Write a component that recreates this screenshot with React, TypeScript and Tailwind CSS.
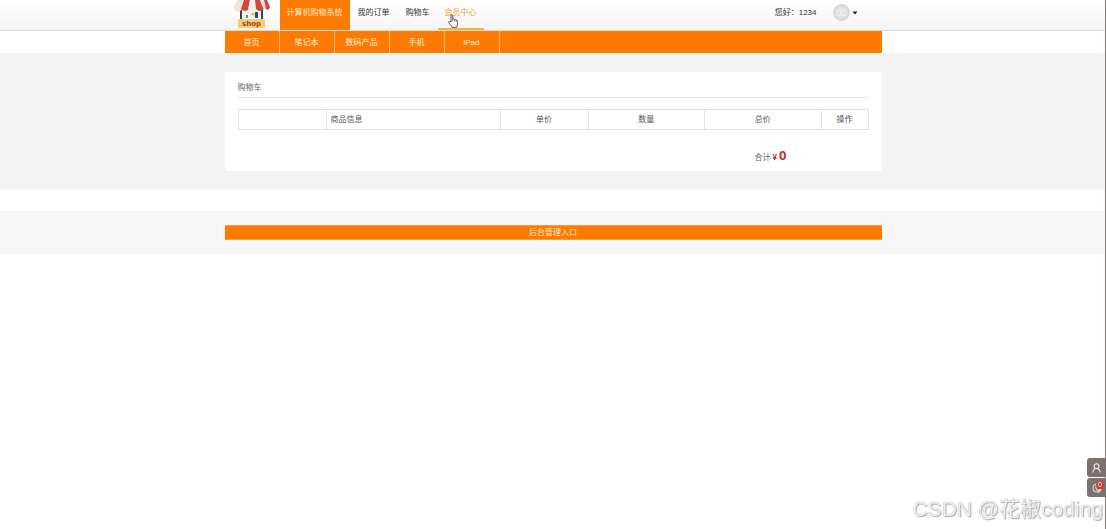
import { ReactNode } from "react";

const topLinks = ["我的订单", "购物车"];

const categories = ["首页", "笔记本", "数码产品", "手机", "iPad"];

const columns = [
  { label: "", className: "w-[88px] text-center" },
  { label: "商品信息", className: "w-[174px] pl-1 text-left" },
  { label: "单价", className: "w-[88px] text-center" },
  { label: "数量", className: "text-center" },
  { label: "总价", className: "text-center" },
  { label: "操作", className: "w-[47px] text-center" },
];

function Container({ children, className = "" }: { children: ReactNode; className?: string }) {
  return <div className={`mx-auto w-full max-w-[657px] ${className}`}>{children}</div>;
}

function ShopLogo() {
  return (
    <svg width="38" height="28" viewBox="0 0 38 28" aria-label="shop">
      <rect x="7" y="9" width="24" height="11" fill="#f7f3ec" />
      <rect x="7" y="10" width="2" height="10" fill="#33465f" />
      <rect x="28" y="10" width="2" height="10" fill="#33465f" />
      <rect x="13" y="15" width="2" height="3" fill="#4d91a0" />
      <rect x="22" y="12" width="3" height="6" fill="#26507a" />
      <circle cx="20" cy="14" r="1.6" fill="#e8b454" />
      <path d="M5 0H12L9 9Q5 14 1 8Z" fill="#eee6dc" stroke="#d8cdc2" strokeWidth=".5" />
      <path d="M11 0H17L16 9Q12 13 8 9Z" fill="#cb493d" />
      <path d="M17 0H22L23 9Q19 13 15 9Z" fill="#f4eee7" />
      <path d="M22 0H27L31 9Q27 13 23 9Z" fill="#cb493d" />
      <path d="M27 0H31L34 8Q32 11 30 8Z" fill="#eee6dc" />
      <path d="M31 0H34L37 7Q36 11 33 9Z" fill="#cb493d" />
      <rect x="5" y="19" width="27" height="9" rx="1" fill="#f5cf70" />
      <text
        x="18.5"
        y="25.5"
        textAnchor="middle"
        fontSize="7"
        fontWeight="700"
        fontFamily="DejaVu Sans, sans-serif"
        fill="#a83d2b"
      >
        shop
      </text>
    </svg>
  );
}

function Avatar() {
  return (
    <svg width="17" height="17" viewBox="0 0 17 17">
      <circle cx="8.5" cy="8.5" r="7.8" fill="#dedede" stroke="#cbcbcb" />
      <rect x="3.5" y="4.5" width="10" height="8" rx="4" fill="#e9e9e9" />
      <circle cx="6" cy="9" r=".7" fill="#c3c3c3" />
      <circle cx="11" cy="9" r=".7" fill="#c3c3c3" />
    </svg>
  );
}

function HandPointer() {
  return (
    <svg
      className="pointer-events-none absolute top-[14px] left-[10px]"
      width="10"
      height="14"
      viewBox="0 0 10 14"
    >
      <path
        d="M3 8V1.7Q3 .6 3.8 .6T4.7 1.7V5Q6 4.4 6.4 5.5Q7.6 5 8 6.1Q9.4 5.8 9.4 7.2V10Q9.4 11.5 8.5 13.3H4Q3.4 11.8 2 10.2L.7 8.5Q.5 7.2 1.8 7.4Z"
        fill="#fff"
        stroke="#44444c"
        strokeWidth=".9"
      />
      <path d="M4.7 5V7.5M6.4 5.5V7.7M8 6.1V8" stroke="#44444c" strokeWidth=".6" />
    </svg>
  );
}

function Header() {
  return (
    <header className="border-b border-[#dcdcdc] bg-linear-to-b from-white to-[#f5f5f5]">
      <Container className="flex h-[30px] justify-between text-[#333]">
        <nav className="flex">
          <a href="#" className="w-[55px] pl-2">
            <ShopLogo />
          </a>
          <a href="#" className="bg-[#ff7a00] px-[7px] leading-[25px] text-[#ffe8cf]">
            计算机购物系统
          </a>
          {topLinks.map((link) => (
            <a key={link} href="#" className="px-2 leading-[25px]">
              {link}
            </a>
          ))}
          <a
            href="#"
            className="relative border-b-2 border-[#f9b13c] px-[7px] leading-[25px] text-[#f5a535]"
          >
            会员中心
            <HandPointer />
          </a>
        </nav>
        <div className="flex h-[25px] items-center pr-6">
          <span className="pr-4">您好：1234</span>
          <button className="flex items-center gap-[2px]" aria-label="账户菜单">
            <Avatar />
            <svg width="6" height="4" viewBox="0 0 6 4">
              <path d="M.5 .5H5.5L3 3.5Z" fill="#222" />
            </svg>
          </button>
        </div>
      </Container>
    </header>
  );
}

function CategoryBar() {
  return (
    <Container>
      <nav className="flex h-[22px] bg-[#ff7a00] text-center leading-[23px] text-[#fff0df]">
        {categories.map((category) => (
          <a key={category} href="#" className="w-[55px] border-r border-[#ffb878]">
            {category}
          </a>
        ))}
      </nav>
    </Container>
  );
}

function Cart() {
  return (
    <main className="bg-[#f3f3f3] py-[19px]">
      <Container className="bg-white px-[13px] pt-2 pb-[3px]">
        <h1 className="mb-[11px] border-b border-[#e6e6e6] pb-px leading-4 text-[#666]">
          购物车
        </h1>
        <table className="w-full table-fixed border-collapse border border-[#dcdcdc] text-[#555]">
          <thead>
            <tr className="h-5">
              {columns.map((column) => (
                <th
                  key={column.label}
                  className={`border border-[#e2e2e2] font-normal ${column.className}`}
                >
                  {column.label}
                </th>
              ))}
            </tr>
          </thead>
        </table>
        <div className="mt-[15px] flex items-baseline justify-end gap-[2px] pr-[82px] leading-5 text-[#666]">
          <span>合计</span>
          <span className="font-['Open_Sans',sans-serif] font-bold text-[#c9302c]">¥</span>
          <span className="font-['Open_Sans',sans-serif] text-[13px] font-bold text-[#c9302c]">
            0
          </span>
        </div>
      </Container>
    </main>
  );
}

function Footer() {
  return (
    <footer className="mt-[21px] bg-[#f7f7f7] py-[14px]">
      <Container>
        <a
          href="#"
          className="block border-y border-[#ff9a3d] bg-[#ff7a00] text-center leading-[13px] text-[#ffe8cf]"
        >
          后台管理入口
        </a>
      </Container>
    </footer>
  );
}

function SideTools() {
  return (
    <aside className="fixed right-0 bottom-8 flex flex-col gap-px">
      <button
        aria-label="用户"
        className="flex h-[19px] w-[19px] items-center justify-center rounded-l-[3px] bg-[#7d7170]"
      >
        <svg width="9" height="10" viewBox="0 0 9 10" fill="none" stroke="#eee" strokeWidth="1.1">
          <circle cx="4.5" cy="3.2" r="2.4" />
          <path d="M.8 9.5Q1 6.5 3.3 5.5M8.2 9.5Q8 6.5 5.7 5.5" />
        </svg>
      </button>
      <button
        aria-label="消息"
        className="relative flex h-[19px] w-[19px] items-center justify-center rounded-l-[3px] bg-[#7d7170]"
      >
        <svg width="10" height="10" viewBox="0 0 10 10" fill="none" stroke="#ddd" strokeWidth="1.1">
          <path d="M5 1A4 4 0 1 0 9 6M5 1Q2.5 5 5.5 7.5L9 6" />
        </svg>
        <span className="absolute top-[3px] right-[2px] h-2 w-2 rounded-full bg-[#d43a37] text-center text-[7px] leading-2 text-white">
          0
        </span>
      </button>
    </aside>
  );
}

export default function App() {
  return (
    <div className="min-h-screen bg-white font-['Liberation_Sans','Noto_Sans_CJK_SC',sans-serif] text-[8px]">
      <Header />
      <CategoryBar />
      <Cart />
      <Footer />
      <div className="fixed inset-y-0 right-0 w-px bg-[#857b7d]" />
      <SideTools />
      <p className="fixed right-[3px] bottom-1 text-[21px] leading-8 text-[#f0f0f0] [text-shadow:1px_1px_1px_#aaa,0_0_1px_#999]">
        CSDN @花椒coding
      </p>
    </div>
  );
}
